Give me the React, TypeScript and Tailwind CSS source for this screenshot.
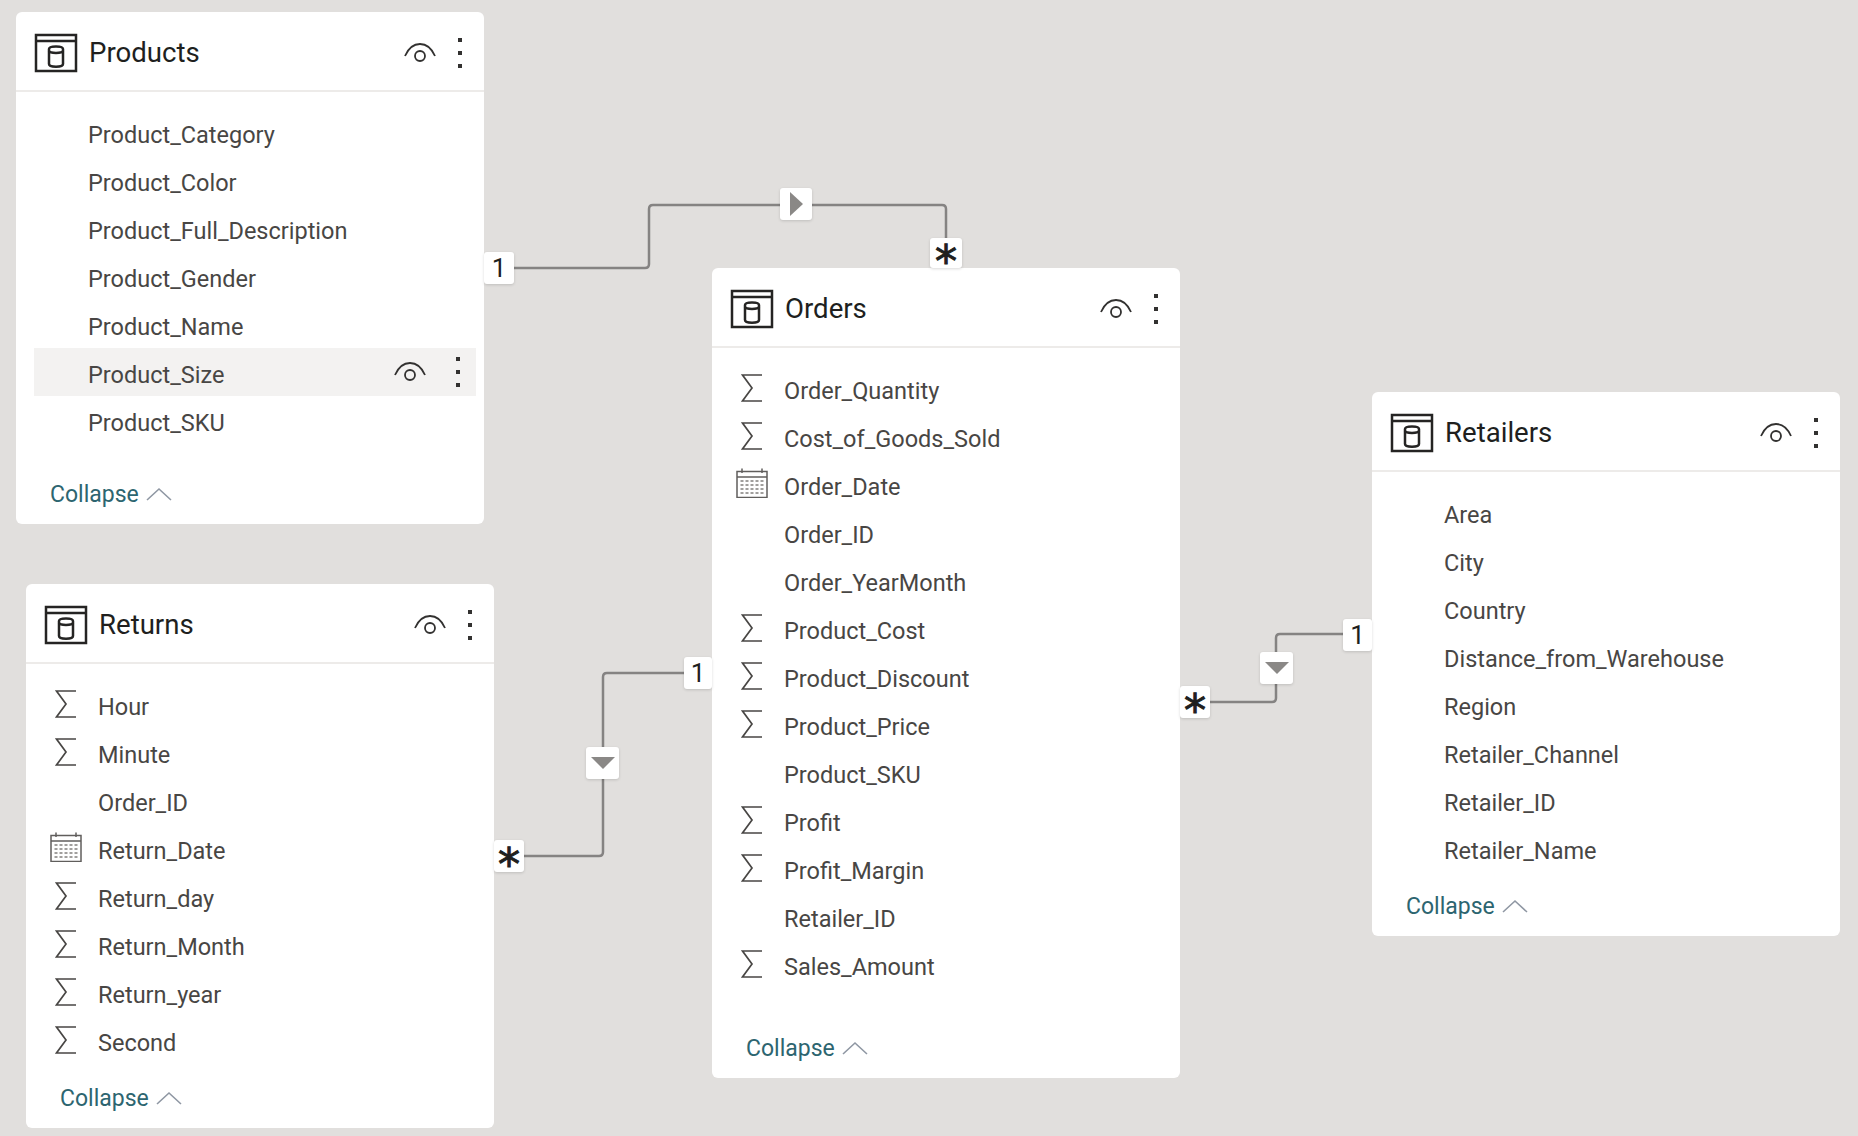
import React from 'react';

type FieldIcon = 'sigma' | 'calendar' | 'none';

interface Field {
    name: string;
    icon?: FieldIcon;
    hovered?: boolean;
}

const TableIcon = () => (
    <svg width="44" height="40" viewBox="0 0 44 40" fill="none" stroke="#252423" strokeWidth="2.500" className="shrink-0">
        <rect x="2" y="2" width="40" height="36"/>
        <line x1="2" y1="8" x2="42" y2="8"/>
        <path d="M15 16c0-3.500 14-3.500 14 0v15c0 3.500-14 3.500-14 0z"/>
        <path d="M15 18c1 2.500 13 2.500 14 0"/>
    </svg>
);

const EyeIcon = () => (
    <svg width="32" height="22" viewBox="0 0 32 22" fill="none" stroke="#323130" strokeWidth="1.800" className="shrink-0">
        <path d="M1 14C5 5 11 2 16 2s11 3 15 12"/>
        <circle cx="16" cy="14" r="5"/>
    </svg>
);

const Dots = () => (
    <div className="flex w-[4px] flex-col gap-[9px]">
        <div className="h-[4px] w-[4px] bg-[#323130]"/>
        <div className="h-[4px] w-[4px] bg-[#323130]"/>
        <div className="h-[4px] w-[4px] bg-[#323130]"/>
    </div>
);

const SigmaIcon = () => (
    <svg width="22" height="28" viewBox="0 0 22 28" fill="none" stroke="#484644" strokeWidth="1.700">
        <path d="M21 1H1.500L11 14 1.500 27H21"/>
    </svg>
);

const CalendarIcon = () => (
    <svg width="32" height="30" viewBox="0 0 32 30" fill="none" className="-mt-[2px]">
        <rect x="1" y="3.500" width="30" height="26" stroke="#605e5c" strokeWidth="1.500"/>
        <line x1="1" y1="9" x2="31" y2="9" stroke="#605e5c" strokeWidth="1.500"/>
        <line x1="6" y1="0.500" x2="6" y2="5" stroke="#605e5c" strokeWidth="1.500"/>
        <line x1="26" y1="0.500" x2="26" y2="5" stroke="#605e5c" strokeWidth="1.500"/>
        {[13, 17, 21, 25].map(y =>
            [6, 11, 16, 21, 26].map(x => (
                <rect key={`${x}-${y}`} x={x - 1.500} y={y - 1} width="3" height="2" fill="#a19f9d"/>
            ))
        )}
    </svg>
);

const Row = ({field}: {field: Field}) => (
    <div className={`ml-[18px] mr-[8px] flex h-[48px] shrink-0 items-center ${field.hovered ? 'bg-[#f3f2f1]' : ''}`}>
        <div className="flex w-[44px] shrink-0 justify-center">
            {field.icon === 'sigma' && <SigmaIcon/>}
            {field.icon === 'calendar' && <CalendarIcon/>}
        </div>
        <span className="ml-[10px] pt-[5px] text-[23.5px] leading-[32px] text-[#484644]">{field.name}</span>
        {field.hovered && (
            <div className="ml-auto flex items-center">
                <EyeIcon/>
                <div className="ml-[30px] mr-[16px]"><Dots/></div>
            </div>
        )}
    </div>
);

const Card = ({title, fields, className}: {title: string; fields: Field[]; className: string}) => (
    <div className={`absolute flex w-[468px] flex-col rounded-[6px] bg-white ${className}`}>
        <div className="flex h-[80px] shrink-0 items-center border-b-2 border-[#edebe9] pl-[18px] pr-[22px] pt-[4px]">
            <TableIcon/>
            <span className="ml-[11px] text-[27.6px] text-[#201f1e]">{title}</span>
            <div className="ml-auto mr-[22px]"><EyeIcon/></div>
            <Dots/>
        </div>
        <div className="mt-[16px] flex flex-col">
            {fields.map(f => <Row key={f.name} field={f}/>)}
        </div>
        <div className="mb-[13px] ml-[34px] mt-auto flex h-[34px] items-center">
            <span className="pt-[3px] text-[23px] text-[#2d6570]">Collapse</span>
            <svg width="26" height="14" viewBox="0 0 26 14" fill="none" stroke="#8f97a3" strokeWidth="1.600" className="ml-[7px]">
                <path d="M1 13 13 2l12 11"/>
            </svg>
        </div>
    </div>
);

const Badge = ({children, className}: {children?: React.ReactNode; className: string}) => (
    <div className={`absolute flex items-center justify-center rounded-[3px] bg-white shadow-[0_1px_3px_rgba(0,0,0,0.15)] ${className}`}>
        {children}
    </div>
);

const Star = () => (
    <span className="mt-[18px] text-[44px] leading-none text-[#201f1e] [-webkit-text-stroke:1px_#201f1e] [font-family:'DejaVu_Sans',sans-serif]">*</span>
);

const One = () => <span className="text-[26px] leading-none text-[#201f1e]">1</span>;

const Arrow = ({dir}: {dir: 'right' | 'down'}) => (
    dir === 'right'
        ? <svg width="13" height="24" viewBox="0 0 13 24"><path d="M0 0 13 12 0 24z" fill="#8a8886"/></svg>
        : <svg width="24" height="12" viewBox="0 0 24 12"><path d="M0 0H24L12 12z" fill="#8a8886"/></svg>
);

const products: Field[] = [
    {name: 'Product_Category'},
    {name: 'Product_Color'},
    {name: 'Product_Full_Description'},
    {name: 'Product_Gender'},
    {name: 'Product_Name'},
    {name: 'Product_Size', hovered: true},
    {name: 'Product_SKU'},
];

const returns: Field[] = [
    {name: 'Hour', icon: 'sigma'},
    {name: 'Minute', icon: 'sigma'},
    {name: 'Order_ID'},
    {name: 'Return_Date', icon: 'calendar'},
    {name: 'Return_day', icon: 'sigma'},
    {name: 'Return_Month', icon: 'sigma'},
    {name: 'Return_year', icon: 'sigma'},
    {name: 'Second', icon: 'sigma'},
];

const orders: Field[] = [
    {name: 'Order_Quantity', icon: 'sigma'},
    {name: 'Cost_of_Goods_Sold', icon: 'sigma'},
    {name: 'Order_Date', icon: 'calendar'},
    {name: 'Order_ID'},
    {name: 'Order_YearMonth'},
    {name: 'Product_Cost', icon: 'sigma'},
    {name: 'Product_Discount', icon: 'sigma'},
    {name: 'Product_Price', icon: 'sigma'},
    {name: 'Product_SKU'},
    {name: 'Profit', icon: 'sigma'},
    {name: 'Profit_Margin', icon: 'sigma'},
    {name: 'Retailer_ID'},
    {name: 'Sales_Amount', icon: 'sigma'},
];

const retailers: Field[] = [
    {name: 'Area'},
    {name: 'City'},
    {name: 'Country'},
    {name: 'Distance_from_Warehouse'},
    {name: 'Region'},
    {name: 'Retailer_Channel'},
    {name: 'Retailer_ID'},
    {name: 'Retailer_Name'},
];

export default function App() {
    return (
        <div className="relative h-[1136px] w-[1858px] overflow-hidden bg-[#e1dfdd] font-['Roboto',sans-serif]">
            {/* relationship lines */}
            <svg width="1858" height="1136" fill="none" stroke="#858382" strokeWidth="2.500" className="absolute left-0 top-0">
                <path d="M514 268H645Q649 268 649 264V209Q649 205 653 205H942Q946 205 946 209V238"/>
                <path d="M524 856H599Q603 856 603 852V677Q603 673 607 673H685"/>
                <path d="M1210 702H1272Q1276 702 1276 698V638Q1276 634 1280 634H1343"/>
            </svg>

            <Card title="Products" fields={products} className="left-[16px] top-[12px] h-[512px]"/>
            <Card title="Returns" fields={returns} className="left-[26px] top-[584px] h-[544px]"/>
            <Card title="Orders" fields={orders} className="left-[712px] top-[268px] h-[810px]"/>
            <Card title="Retailers" fields={retailers} className="left-[1372px] top-[392px] h-[544px]"/>

            <Badge className="left-[484px] top-[252px] h-[32px] w-[30px]"><One/></Badge>
            <Badge className="left-[780px] top-[188px] h-[32px] w-[32px]"><Arrow dir="right"/></Badge>
            <Badge className="left-[930px] top-[238px] h-[30px] w-[32px]"><Star/></Badge>

            <Badge className="left-[494px] top-[840px] h-[32px] w-[30px]"><Star/></Badge>
            <Badge className="left-[586px] top-[747px] h-[32px] w-[33px]"><Arrow dir="down"/></Badge>
            <Badge className="left-[684px] top-[657px] h-[32px] w-[28px]"><One/></Badge>

            <Badge className="left-[1180px] top-[686px] h-[32px] w-[30px]"><Star/></Badge>
            <Badge className="left-[1260px] top-[652px] h-[32px] w-[33px]"><Arrow dir="down"/></Badge>
            <Badge className="left-[1343px] top-[619px] h-[32px] w-[29px]"><One/></Badge>
        </div>
    );
}
